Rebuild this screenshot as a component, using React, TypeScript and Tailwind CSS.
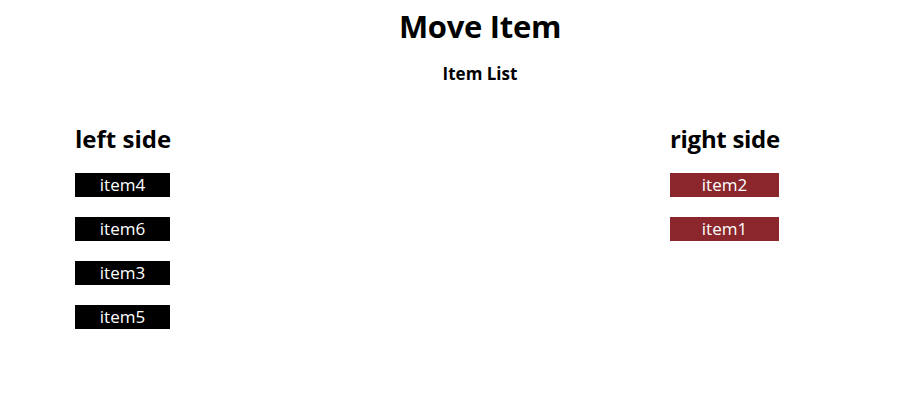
import React from "react";

const left = ["item4", "item6", "item3", "item5"];
const right = ["item2", "item1"];

export default function App() {
  return (
    <div
      className="w-[900px] h-[403px] bg-white text-black flex flex-col"
      style={{ fontFamily: '"Open Sans", "Noto Sans", sans-serif' }}
    >
      <h1 className="mt-[10px] pl-[60px] text-center text-[31px] leading-[32px] font-bold tracking-[-0.3px]">Move Item</h1>
      <h4 className="mt-[22px] pl-[60px] text-center text-[17px] leading-[20px] font-bold">Item List</h4>
      <div className="mt-[41px] flex pl-[75px]">
        <div className="w-[95px] flex flex-col">
          <h2 className="text-[24px] leading-[28px] font-bold whitespace-nowrap">left side</h2>
          <div className="mt-[20px] flex flex-col gap-[20px]">
            {left.map((t) => (
              <div key={t} className="h-[24px] bg-black text-white text-center text-[17px] leading-[24px]">
                {t}
              </div>
            ))}
          </div>
        </div>
        <div className="ml-[500px] w-[109px] flex flex-col">
          <h2 className="text-[24px] leading-[28px] font-bold whitespace-nowrap tracking-[-0.3px]">right side</h2>
          <div className="mt-[20px] flex flex-col gap-[20px]">
            {right.map((t) => (
              <div key={t} className="h-[24px] bg-[#8a262c] text-white text-center text-[17px] leading-[24px]">
                {t}
              </div>
            ))}
          </div>
        </div>
      </div>
    </div>
  );
}
